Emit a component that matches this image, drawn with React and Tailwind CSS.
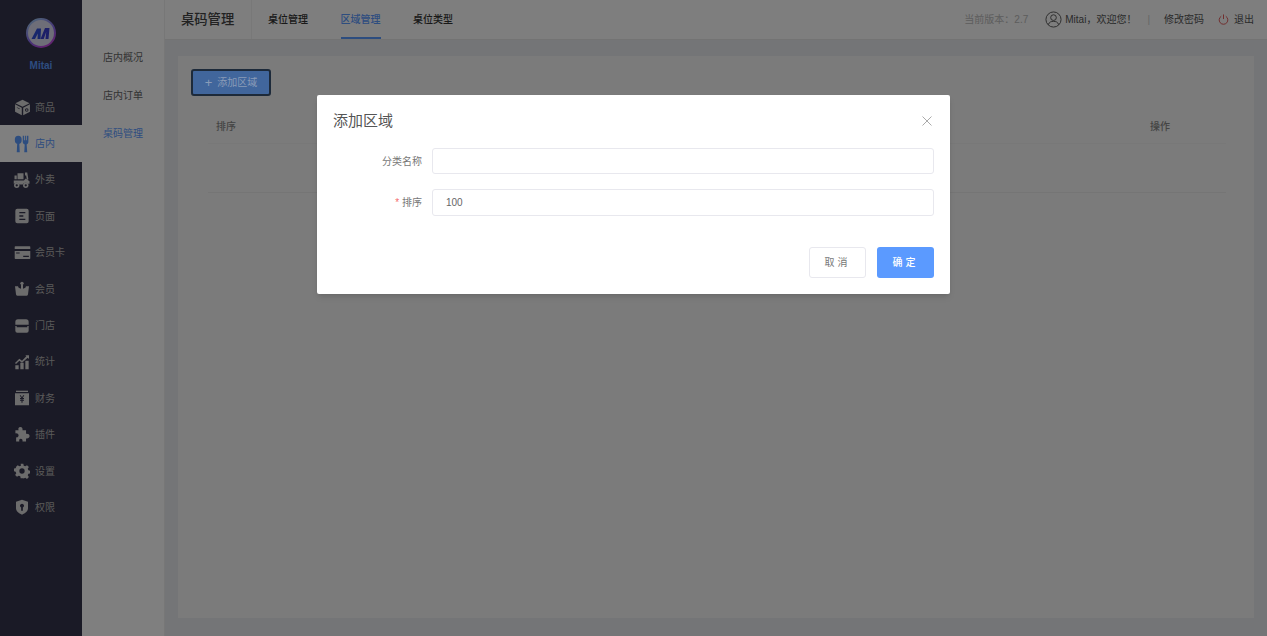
const I = ({ children, w = 16, vb = "0 0 24 24" }) => (
  <svg width={w} height={w} viewBox={vb} fill="currentColor" className="shrink-0">{children}</svg>
);

const BG = "#35344c";

const icons = {
  box: <I w={17}><path d="M12 1 22 6 12 11 2 6Z" /><path d="M1.500 7.500 11 12.500V23L1.500 18ZM4 11.500l4 2v1l-4-2Z" fillRule="evenodd" /><path d="M13 12.500 22.500 7.500V18L13 23Z" /><circle cx="18" cy="15.500" r="2.500" fill={BG} /><circle cx="18" cy="15.500" r="1.200" /></I>,
  fork: <I w={18}><ellipse cx="7" cy="6.500" rx="4.600" ry="5.500" /><path d="M5.600 11h2.800l.6 12H5Z" /><path d="M13 1h1.600v6h1.200V1h1.400v6h1.200V1H20.500v8c0 2-1 3-2.300 3.500L19 23h-4l.6-10.500C14 12 13 11 13 9Z" /></I>,
  moped: <I w={18}><path d="M6 3h8v8H6zM2 6h3v5H2zM16 2h3l1.500 9-2 1-1-6H16z" /><path d="M1 12.500h13.500L17 10l5 3.500V17h-2a4.200 4.200 0 0 0-7 1H8.500a4.200 4.200 0 0 0-7-1H1Z" /><circle cx="5" cy="19" r="3.600" /><circle cx="17" cy="19" r="3.600" /><circle cx="5" cy="19" r="1.500" fill={BG} /><circle cx="17" cy="19" r="1.500" fill={BG} /></I>,
  page: <I w={16}><path fillRule="evenodd" d="M5 1h14a3 3 0 0 1 3 3v16a3 3 0 0 1-3 3H5a3 3 0 0 1-3-3V4a3 3 0 0 1 3-3Zm3 5v2h9V6Zm0 5v2h6v-2Zm0 5v2h9v-2Z" /></I>,
  card: <I w={17}><path fillRule="evenodd" d="M2 3h20a1 1 0 0 1 1 1v3H1V4a1 1 0 0 1 1-1ZM1 10h22v10a1 1 0 0 1-1 1H2a1 1 0 0 1-1-1Zm2 2v1.500h5V12Zm10 4.500v2h8v-2Z" /></I>,
  crown: <I w={16}><circle cx="12" cy="3.500" r="2.500" /><path d="M10.500 5h3v6.500L17 10l1-2h4.500L21 20a2 2 0 0 1-2 2H5a2 2 0 0 1-2-2L1.500 8H6l1 2 3.500 1.500Z" /></I>,
  store: <I w={16}><path fillRule="evenodd" d="M6 2h12a4 4 0 0 1 4 4v4H2V6a4 4 0 0 1 4-4ZM2 12h2v2h16v-2h2v7a3 3 0 0 1-3 3H5a3 3 0 0 1-3-3Z" /></I>,
  chart: <I w={16}><path d="M2 17h5v6H2ZM9.500 13h5v10h-5ZM17 10h5v13h-5Z" /><path d="M1.500 13.500 8 7l4 3 6.500-6.500L17 2h5.500v5.500L20.500 5.500 12 13 8 10l-5 5Z" /></I>,
  wallet: <I w={16}><path d="M3 1h18v2H3Z" /><path fillRule="evenodd" d="M1.500 5h21v18h-21ZM8.500 8l2.500 4H9v1.500h2.200v1H9V16h2.200v3h1.600v-3H15v-1.500h-2.200v-1H15V12h-2l2.500-4h-1.800L12 11l-2-3Z" /></I>,
  puzzle: <I w={17}><path d="M9 1.500c2.500 0 3.500 2 3 4.500h5v5c2.500-.5 5 .5 5 3.200s-2.500 3.800-5 3.300V22h-5c.5-2.500-.5-4-2.500-4S7 19.500 7.500 22H3v-6c2.200.5 3.500-1 3.500-2.800S4.200 10 2 10.500V6h4.500C5.500 3.500 6.500 1.500 9 1.500Z" /></I>,
  gear: <I w={16}><path fillRule="evenodd" d="M10 1h4l.6 3 2.300 1 2.600-1.700 2.800 2.800-1.700 2.600 1 2.300 3 .6v4l-3 .6-1 2.300 1.700 2.600-2.800 2.800-2.600-1.700-2.300 1L14 23h-4l-.6-3-2.300-1-2.600 1.700-2.800-2.800 1.700-2.600-1-2.300-3-.6v-4l3-.6 1-2.300L2.700 6.100 5.500 3.300 8.100 5l2.300-1ZM12 8a4 4 0 1 0 0 8 4 4 0 0 0 0-8Z" /></I>,
  shield: <I w={16}><path fillRule="evenodd" d="M12 1 21 4v10c0 4.500-4 7.500-9 9.500C7 21.500 3 18.500 3 14V4Zm0 6a3 3 0 0 0-1.300 5.700V17.500h2.600v-4.800A3 3 0 0 0 12 7Z" /></I>,
};

const menu = [
  ["商品", "box"], ["店内", "fork", true], ["外卖", "moped"], ["页面", "page"], ["会员卡", "card"], ["会员", "crown"],
  ["门店", "store"], ["统计", "chart"], ["财务", "wallet"], ["插件", "puzzle"], ["设置", "gear"], ["权限", "shield"],
];

export default function App() {
  return (
    <div className="relative flex h-[636px] w-[1267px] overflow-hidden bg-[#e9ebee] text-[10px] text-[#333] [font-family:'Liberation_Sans','Noto_Sans_CJK_SC',sans-serif]">
      <aside className="flex w-[82px] shrink-0 flex-col bg-[#35344c]">
        <div className="flex h-[89px] flex-col items-center pt-[18px]">
          <svg width="30" height="30" viewBox="0 0 30 30">
            <defs>
              <linearGradient id="ring" x1="0.2" y1="0" x2="0.8" y2="1">
                <stop offset="0" stopColor="#9fc8f0" />
                <stop offset="0.55" stopColor="#8a6cf0" />
                <stop offset="1" stopColor="#d040e0" />
              </linearGradient>
            </defs>
            <circle cx="15" cy="15" r="14" fill="#dcdcf0" stroke="url(#ring)" strokeWidth="2" />
            <path d="M5.500 21 11 10.500h4l-.5 10.500h-3l.3-5.500-2.800 5.500Z" fill="#2f4fd8" />
            <path d="M14.500 21 19 10h4.500l-1 11h-3l.7-7-2.500 7Z" fill="#3a3fd0" />
          </svg>
          <span className="mt-[11px] text-[10px] font-bold leading-[14px] text-[#5b9aff]">Mitai</span>
        </div>
        {menu.map(([label, icon, active]) => (
          <div
            key={label}
            className={`flex h-[36.4px] items-center pl-[13px] ${active ? "bg-white text-[#5b9aff]" : "text-[#d8d8d8]"}`}
          >
            <span className="flex w-[18px] justify-center">{icons[icon]}</span>
            <span className={`ml-[4px] whitespace-nowrap ${active ? "text-[#5b9aff]" : "text-[#b4b4b4]"}`}>{label}</span>
          </div>
        ))}
      </aside>

      <nav className="flex w-[83px] shrink-0 flex-col gap-[24px] border-r border-[#eee] bg-white pl-[21px] pt-[51px] leading-[14px] text-[#666]">
        <span>店内概况</span>
        <span>店内订单</span>
        <span className="text-[#5b9aff]">桌码管理</span>
      </nav>

      <main className="flex min-w-0 flex-1 flex-col">
        <header className="flex h-[40px] shrink-0 items-center border-b border-[#e6e6e6] bg-[#fcfcfc]">
          <div className="flex h-full w-[87px] items-center border-r border-[#f0f0f0] pl-[16px] text-[13.3px] font-medium text-[#444]">桌码管理</div>
          <div className="flex h-full items-center gap-[32.5px] pl-[16px] font-medium text-[#333]">
            <span>桌位管理</span>
            <span className="flex h-full items-center border-b-2 border-[#5b9aff] pt-[2px] text-[#5b9aff]">区域管理</span>
            <span>桌位类型</span>
          </div>
          <div className="ml-auto flex items-center pr-[13px] text-[#555]">
            <span className="text-[#bbb]">当前版本：2.7</span>
            <svg className="ml-[17px]" width="17" height="17" viewBox="0 0 18 18" fill="none" stroke="#555" strokeWidth="1">
              <circle cx="9" cy="9" r="8" />
              <circle cx="9" cy="7" r="3" />
              <path d="M3.500 14.500c1-3 3-3.500 5.500-3.500s4.500.5 5.500 3.500" />
            </svg>
            <span className="ml-[3px]">Mitai，欢迎您！</span>
            <span className="ml-[11px] text-[#ccc]">|</span>
            <span className="ml-[14px]">修改密码</span>
            <svg className="ml-[14px]" width="11" height="11" viewBox="0 0 12 12" fill="none" stroke="#e05050" strokeWidth="1">
              <path d="M3.500 2.500a4.700 4.700 0 1 0 5 0M6 .5v5" />
            </svg>
            <span className="ml-[5px]">退出</span>
          </div>
        </header>
        <div className="flex-1 px-[13px] pb-[18px] pt-[16px]">
          <section className="h-full bg-[#f7f7f7] pl-[13px] pr-[28px] pt-[13px]">
            <button className="relative z-10 flex h-[27px] w-[80px] items-center justify-center gap-[5px] rounded-[3px] border-2 border-[#1d2a3a] bg-[#41669c] text-[#8a9cb8]">
              <span className="text-[13px] font-light leading-none">+</span>添加区域
            </button>
            <div className="ml-[17px] mt-[9px] flex h-[39px] items-center justify-between border-b border-[#f0f0f0] pl-[8px] pr-[56px] pt-[5px] font-medium text-[#888]">
              <span>排序</span>
              <span>操作</span>
            </div>
            <div className="ml-[17px] h-[49px] border-b border-[#eaeaea]" />
          </section>
        </div>
      </main>

      <div className="absolute inset-0 bg-black/50">
        <div className="mx-auto mt-[95px] h-[199px] w-[633px] rounded-[2px] bg-white px-[16px] shadow-md">
          <div className="flex h-[53px] items-center justify-between pb-[2px]">
            <span className="text-[15px] leading-none text-[#555]">添加区域</span>
            <svg className="mr-[2px]" width="10" height="10" viewBox="0 0 10 10" stroke="#aaa" strokeWidth="1"><path d="M.5.500l9 9M9.500.500l-9 9" /></svg>
          </div>
          <div className="flex h-[26px] items-center">
            <label className="w-[89px] text-right text-[#777]">分类名称</label>
            <input className="ml-[10px] h-[26px] flex-1 rounded-[3px] border border-[#e8e8ee] bg-white" />
          </div>
          <div className="mt-[15px] flex h-[27px] items-center">
            <label className="w-[89px] text-right text-[#777]"><span className="text-[#f56c6c]">* </span>排序</label>
            <input readOnly value="100" className="ml-[10px] h-[27px] flex-1 rounded-[3px] border border-[#e8e8ee] bg-white pl-[13px] text-[10px] text-[#666]" />
          </div>
          <div className="mt-[31px] flex justify-end gap-[11px]">
            <button className="h-[31px] w-[57px] rounded-[3px] border border-[#e8e8ee] bg-white tracking-[3px] text-[#777]">取消</button>
            <button className="h-[31px] w-[57px] rounded-[3px] bg-[#5b9aff] font-medium tracking-[3px] text-white">确定</button>
          </div>
        </div>
      </div>
    </div>
  );
}
